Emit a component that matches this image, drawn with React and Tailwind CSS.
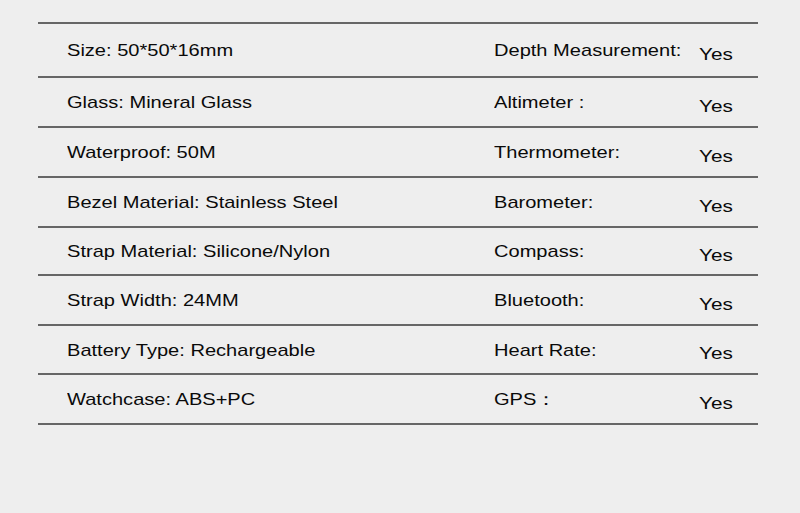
const rows = [
  { left: 'Size: 50*50*16mm', label: 'Depth Measurement:', h: 'h-[52px]' },
  { left: 'Glass: Mineral Glass', label: 'Altimeter :', h: 'h-[48px]' },
  { left: 'Waterproof: 50M', label: 'Thermometer:', h: 'h-[48px]' },
  { left: 'Bezel Material: Stainless Steel', label: 'Barometer:', h: 'h-[48px]' },
  { left: 'Strap Material: Silicone/Nylon', label: 'Compass:', h: 'h-[46px]' },
  { left: 'Strap Width: 24MM', label: 'Bluetooth:', h: 'h-[48px]' },
  { left: 'Battery Type: Rechargeable', label: 'Heart Rate:', h: 'h-[47px]' },
  { left: 'Watchcase: ABS+PC', label: 'GPS\uFF1A', h: 'h-[48px]' },
];

// the source picture is stretched sideways, so the glyphs are widened
const wide = 'inline-block origin-left scale-x-[1.18] whitespace-nowrap';

export default function App() {
  return (
    <div className="w-[800px] h-[513px] bg-[#eeeeee] pt-[22px] pl-[38px] font-['Liberation_Sans',Arial,sans-serif] text-[17px] text-[#0a0a0a]">
      <div className="w-[720px] border-t-2 border-[#666666]">
        {rows.map((r) => (
          <div key={r.left} className={`${r.h} box-content border-b-2 border-[#666666] flex items-center`}>
            <div className="w-[456px] pl-[29px] pt-[2px]"><span className={wide}>{r.left}</span></div>
            <div className="w-[205px] pt-[2px]"><span className={wide}>{r.label}</span></div>
            <div className="pt-[9px]"><span className="inline-block origin-left scale-x-[1.22] whitespace-nowrap">Yes</span></div>
          </div>
        ))}
      </div>
    </div>
  );
}
